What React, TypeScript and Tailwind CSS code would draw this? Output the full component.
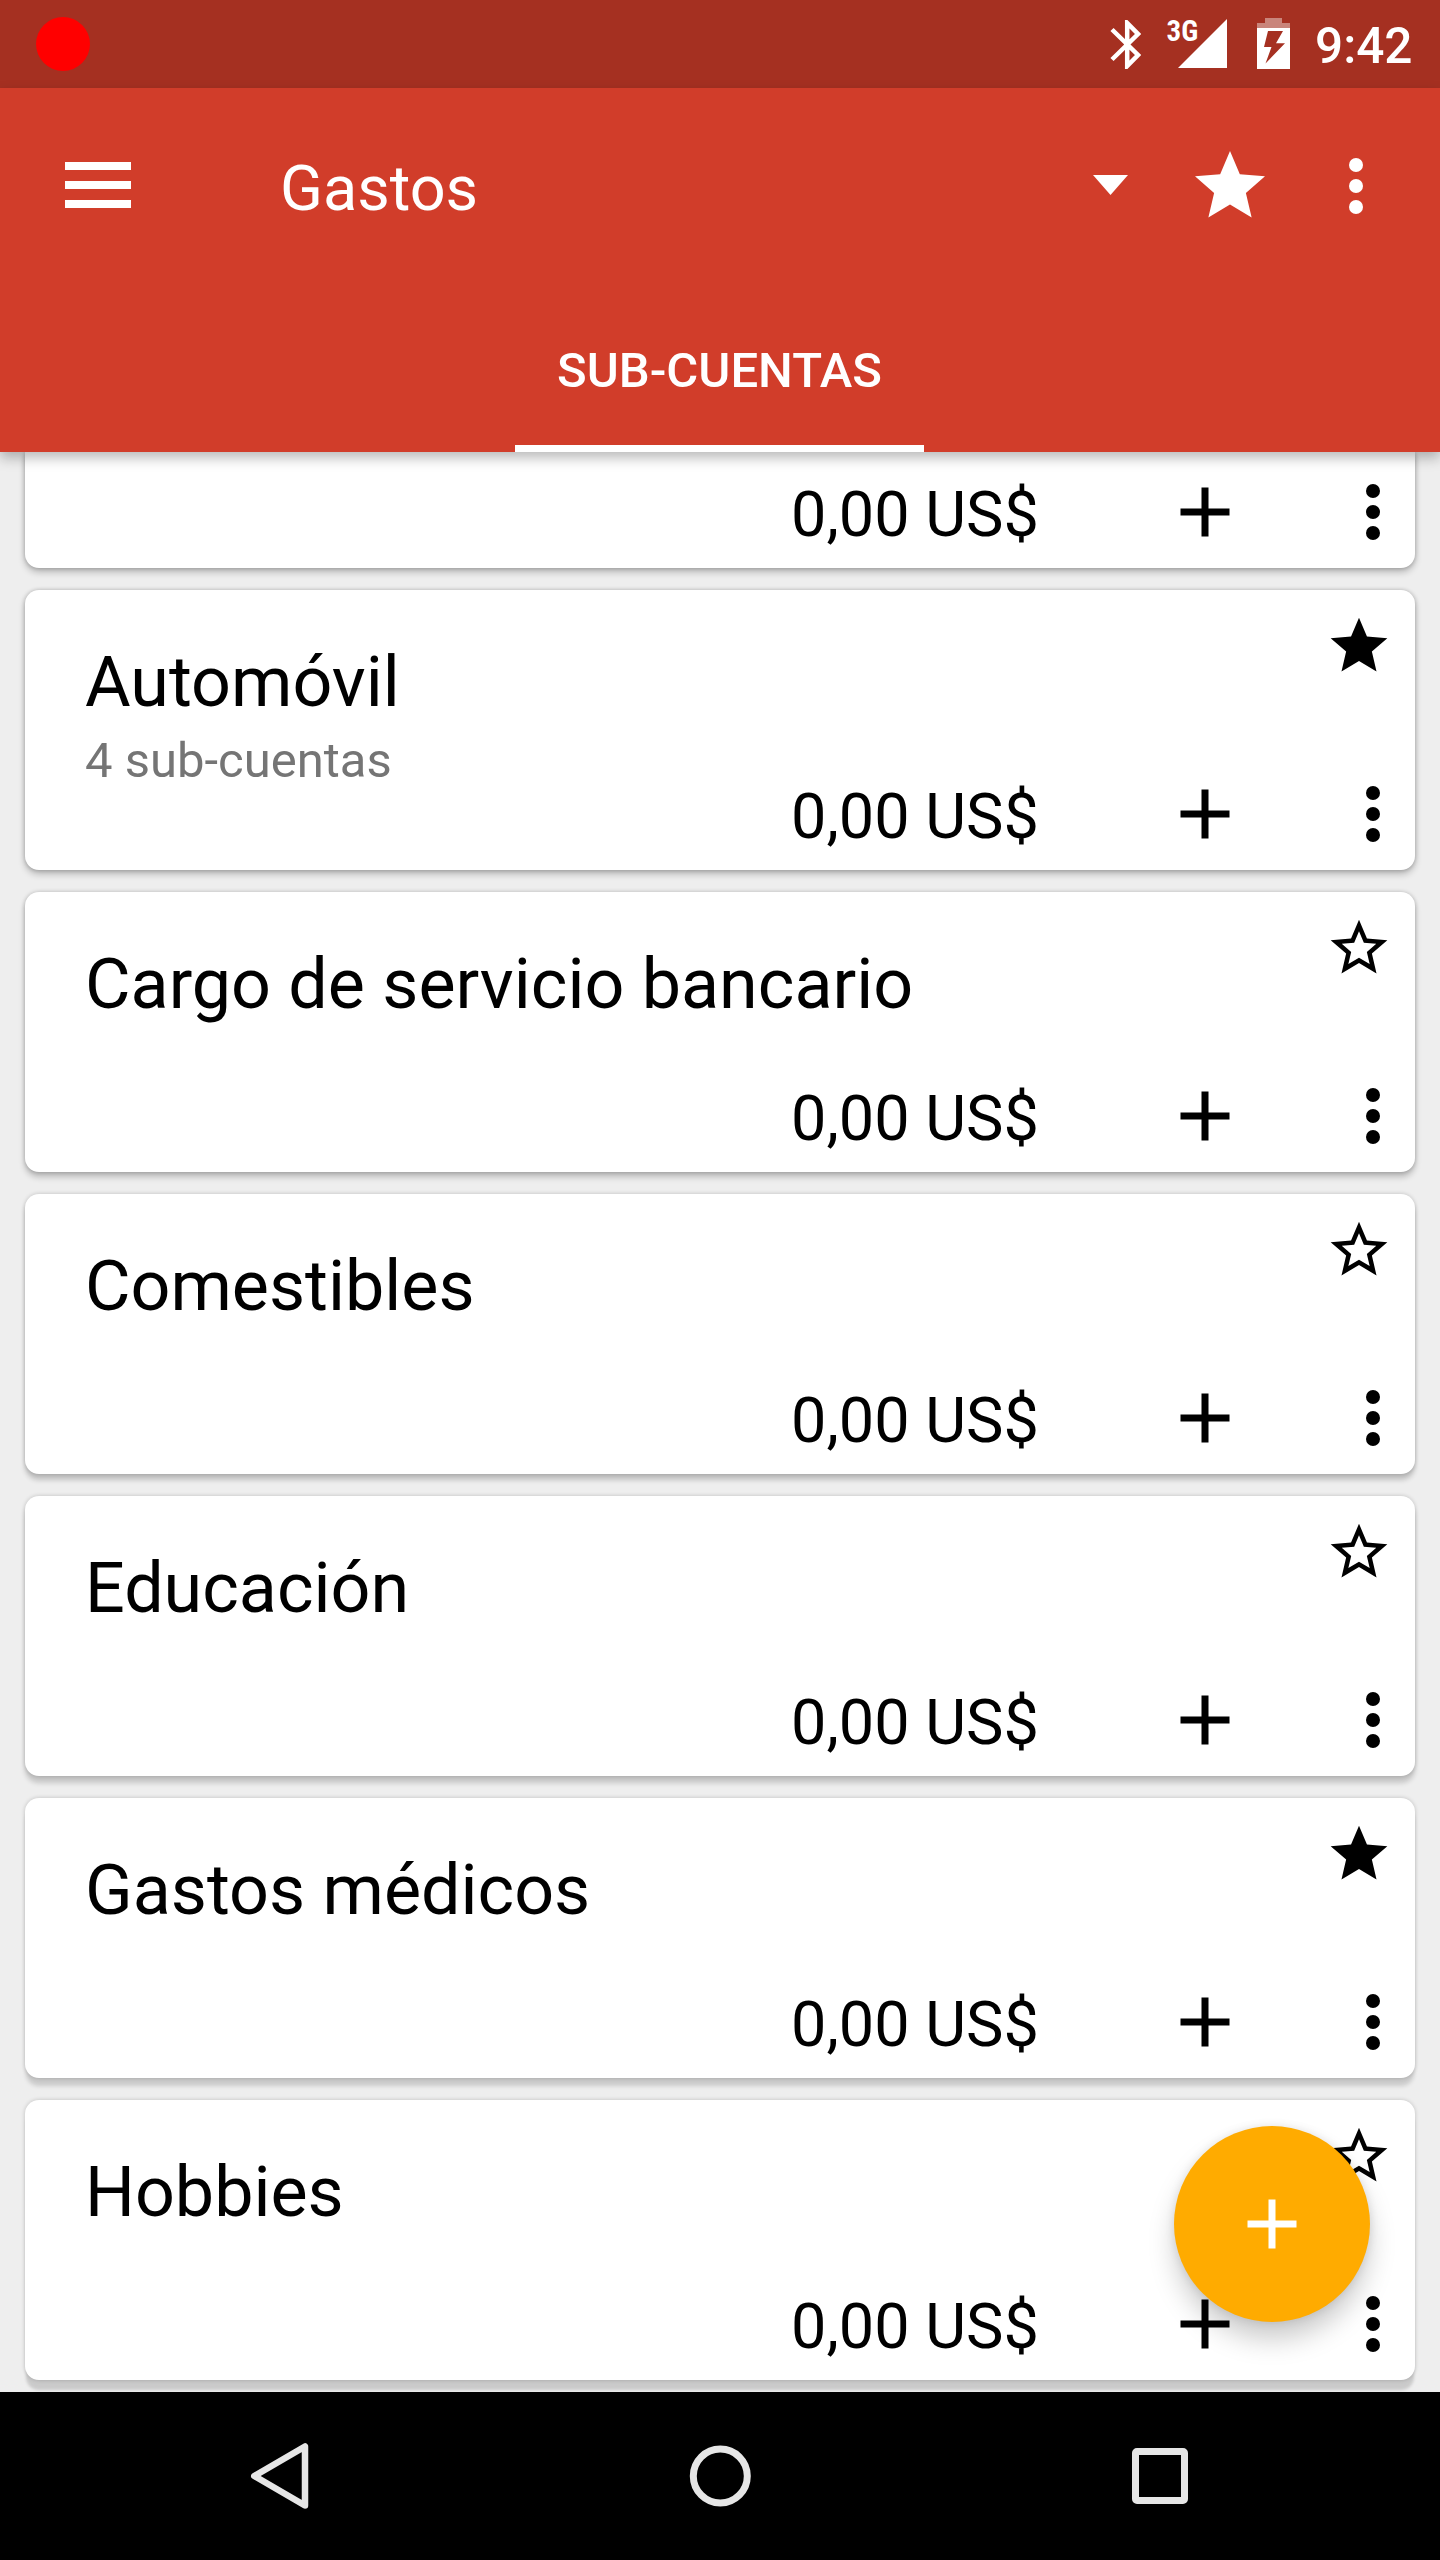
const STAR = 'M12 17.27L18.18 21l-1.64-7.03L22 9.24l-7.19-.61L12 2 9.19 8.63 2 9.24l5.46 4.73L5.82 21z';
const STAR_OUTLINE = 'M22 9.24l-7.19-.62L12 2 9.19 8.63 2 9.24l5.46 4.73L5.82 21 12 17.27 18.18 21l-1.63-7.03L22 9.24zM12 15.4l-3.76 2.27 1-4.28-3.32-2.88 4.38-.38L12 6.1l1.71 4.04 4.38.38-3.32 2.88 1 4.28L12 15.4z';

type Account = { name: string; sub?: string; favorite: boolean; shadow: string };

const accounts: Account[] = [
  { name: 'Automóvil', sub: '4 sub-cuentas', favorite: true, shadow: 'shadow-[0_4px_7px_rgba(0,0,0,0.24),0_0_4px_rgba(0,0,0,0.22)]' },
  { name: 'Cargo de servicio bancario', favorite: false, shadow: 'shadow-[0_5px_6px_rgba(0,0,0,0.22),0_0_4px_rgba(0,0,0,0.22)]' },
  { name: 'Comestibles', favorite: false, shadow: 'shadow-[0_6px_5px_rgba(0,0,0,0.19),0_0_4px_rgba(0,0,0,0.2)]' },
  { name: 'Educación', favorite: false, shadow: 'shadow-[0_7px_5px_rgba(0,0,0,0.17),0_0_4px_rgba(0,0,0,0.2)]' },
  { name: 'Gastos médicos', favorite: true, shadow: 'shadow-[0_9px_4px_-1px_rgba(0,0,0,0.15),0_0_4px_rgba(0,0,0,0.2)]' },
  { name: 'Hobbies', favorite: false, shadow: 'shadow-[0_11px_3px_-1px_rgba(0,0,0,0.15),0_0_4px_rgba(0,0,0,0.2)]' },
];

function Dots({ className }: { className: string }) {
  return (
    <svg className={className} width="14" height="56" viewBox="0 0 14 56" fill="currentColor">
      <circle cx="7" cy="7" r="7" />
      <circle cx="7" cy="28" r="7" />
      <circle cx="7" cy="49" r="7" />
    </svg>
  );
}

function Plus({ className }: { className?: string }) {
  return (
    <svg className={className} width="50" height="50" viewBox="0 0 50 50" fill="currentColor">
      <path d="M21.5 .5h7v21h21v7h-21v21h-7v-21H.5v-7h21z" />
    </svg>
  );
}

function BalanceRow() {
  return (
    <div className="flex h-14 items-center">
      <span className="ml-auto w-[247px] whitespace-nowrap pt-[6px] text-[63px] leading-[56px]">0,00 US$</span>
      <Plus className="ml-[142px]" />
      <Dots className="ml-[136px] mr-[35px]" />
    </div>
  );
}

function AccountCard({ account }: { account: Account }) {
  return (
    <article className={`flex h-[280px] shrink-0 flex-col rounded-[14px] bg-white ${account.shadow}`}>
      <div className="flex h-[196px] justify-between pl-[60px]">
        <div className="pt-[50px]">
          <h2 className="text-[70px] leading-[84px]">{account.name}</h2>
          {account.sub && <p className="text-[49px] leading-[74px] text-[#757575]">{account.sub}</p>}
        </div>
        <svg className="mr-[22px] mt-[22px] size-[68px]" viewBox="0 0 24 24">
          <path d={account.favorite ? STAR : STAR_OUTLINE} />
        </svg>
      </div>
      <BalanceRow />
    </article>
  );
}

function StatusBar() {
  return (
    <div className="flex h-[88px] shrink-0 items-center bg-[#a53021] pl-9 pr-[28px] text-white">
      <span className="size-[54px] rounded-full bg-[#ff0000]" />
      <svg className="ml-auto mt-px" width="31" height="49" viewBox="0 0 31 49" fill="none" stroke="currentColor" strokeWidth="4.5">
        <path d="M2 9.500L28 35 17.200 46V3L28 14 2 39.500" />
      </svg>
      <div className="relative ml-[25px] h-[50px] w-[61px]">
        <span className="absolute -top-[1px] left-[0.5px] text-[29px] font-bold leading-[26px] [font-stretch:75%]">3G</span>
        <svg width="61" height="50" viewBox="0 0 61 50" fill="currentColor">
          <path d="M61 0v49H12z" />
        </svg>
      </div>
      <svg className="mb-px ml-[30px]" width="33" height="51" viewBox="0 0 33 51">
        <path d="M8 0h17v5h8v5H0V5h8z" fill="#c9857b" />
        <path d="M0 10h33v41H0zM11 13L7 29h7.500L8.500 45.500 28 25.300H19L26 13z" fill="#fff" fillRule="evenodd" />
      </svg>
      <span className="ml-[25px] w-[97px] whitespace-nowrap pt-[5px] text-[49.5px] font-medium leading-none">9:42</span>
    </div>
  );
}

function AppBar() {
  return (
    <header className="relative z-10 flex h-[364px] shrink-0 flex-col bg-[#d13d2a] text-white shadow-[0_6px_12px_rgba(0,0,0,0.27)]">
      <div className="flex h-[196px] items-center pl-[65px] pr-[77px]">
        <svg className="mb-[3px]" width="66" height="46" viewBox="0 0 66 46" fill="currentColor">
          <path d="M0 0h66v8H0zM0 19h66v8H0zM0 38h66v8H0z" />
        </svg>
        <h1 className="ml-[149px] pt-[4px] text-[63px] leading-none">Gastos</h1>
        <svg className="mb-[2px] ml-auto" width="35" height="20" viewBox="0 0 35 20" fill="currentColor">
          <path d="M0 0h35L17.500 20z" />
        </svg>
        <svg className="ml-[60px] size-[84px]" viewBox="0 0 24 24" fill="currentColor">
          <path d={STAR} />
        </svg>
        <Dots className="ml-[77px]" />
      </div>
      <div className="flex grow pl-[515px]">
        <div className="flex w-[409px] items-center justify-center border-b-[7px] border-white pt-[12px] text-[49px] font-medium">SUB-CUENTAS</div>
      </div>
    </header>
  );
}

function NavigationBar() {
  return (
    <nav className="relative flex h-[168px] shrink-0 items-center justify-between bg-black pl-[250px] pr-[252px]">
      <svg width="60" height="68" viewBox="0 0 60 68" fill="none" stroke="#e6e6e6" strokeWidth="6.5" strokeLinejoin="round">
        <path d="M55 4.500v59L4.300 34z" />
      </svg>
      <svg width="64" height="64" viewBox="0 0 64 64" fill="none" stroke="#e6e6e6" strokeWidth="7">
        <circle cx="31.300" cy="32" r="27" />
      </svg>
      <span className="size-[56px] rounded-[5px] border-[7px] border-[#e6e6e6]" />
    </nav>
  );
}

export default function App() {
  return (
    <div className="relative flex h-[2560px] w-[1440px] flex-col overflow-hidden bg-[#eeeeee] font-['Roboto',sans-serif] text-black">
      <StatusBar />
      <AppBar />
      <main className="flex h-[1940px] shrink-0 flex-col gap-[22px] overflow-hidden px-[25px]">
        <div className="flex h-[116px] shrink-0 flex-col rounded-b-[14px] bg-white pt-8 shadow-[0_4px_7px_rgba(0,0,0,0.24),0_0_4px_rgba(0,0,0,0.22)]">
          <BalanceRow />
        </div>
        {accounts.map((account) => (
          <AccountCard key={account.name} account={account} />
        ))}
      </main>
      <button className="absolute bottom-[238px] right-[70px] flex size-[196px] items-center justify-center rounded-full bg-[#ffab00] text-white shadow-[0_18px_28px_-2px_rgba(0,0,0,0.22),0_0_10px_rgba(0,0,0,0.1)]">
        <Plus />
      </button>
      <NavigationBar />
    </div>
  );
}
